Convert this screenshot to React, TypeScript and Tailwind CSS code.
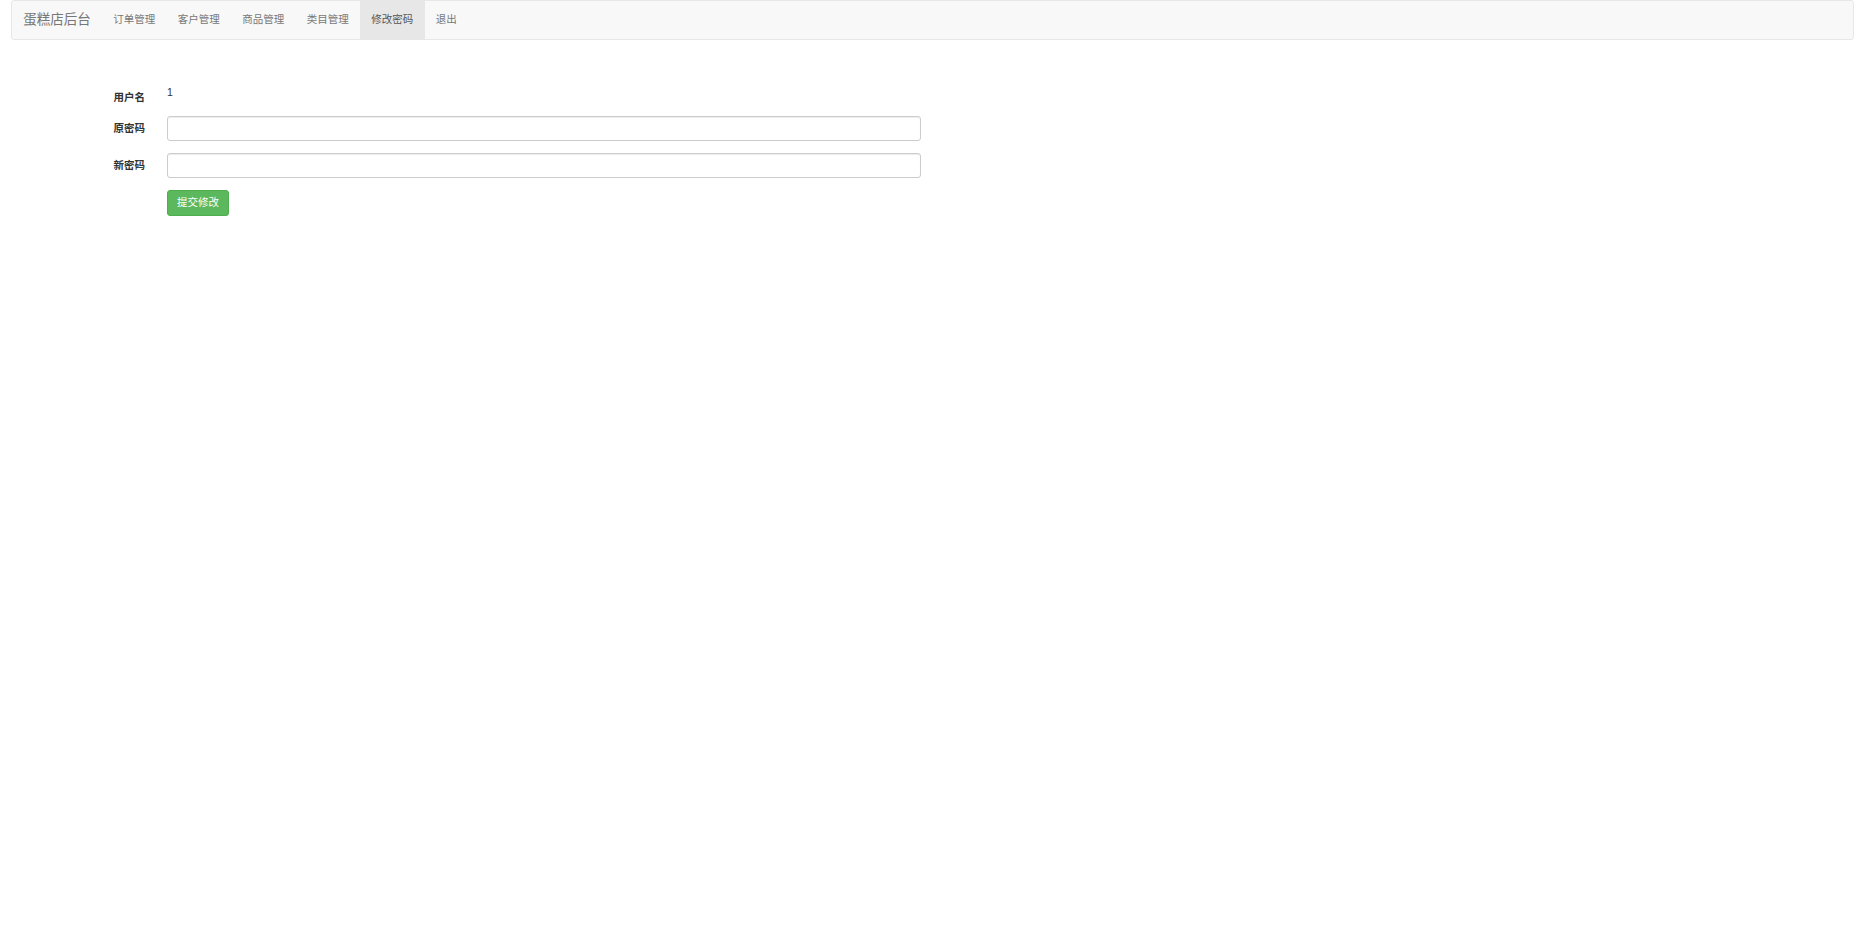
const navItems = ['订单管理', '客户管理', '商品管理', '类目管理', '修改密码', '退出'];
const active = '修改密码';

function Navbar() {
  return (
    <nav className="mx-[11px] flex h-[40px] rounded-[3px] border border-[#e7e7e7] bg-[#f8f8f8]">
      <a className="flex items-center px-[11.25px] text-[13.5px] text-[#777]">蛋糕店后台</a>
      <ul className="flex">
        {navItems.map((item) => (
          <li
            key={item}
            className={
              item === active
                ? 'flex items-center bg-[#e7e7e7] px-[11.25px] text-[10.5px] text-[#555]'
                : 'flex items-center px-[11.25px] text-[10.5px] text-[#777]'
            }
          >
            {item}
          </li>
        ))}
      </ul>
    </nav>
  );
}

function PasswordRow({ label }: { label: string }) {
  return (
    <div className="flex h-[25.5px] items-center">
      <label className="w-[44px] text-right text-[10.5px] font-bold leading-[15px] text-[#333]">{label}</label>
      <input
        type="password"
        className="ml-[22px] h-[25.5px] w-[754px] rounded-[3px] border border-[#ccc] bg-white px-[9px] text-[10.5px] shadow-[inset_0_1px_1px_rgba(0,0,0,0.075)] outline-none"
      />
    </div>
  );
}

export default function App() {
  return (
    <div className="min-h-screen bg-white font-['Liberation_Sans','Noto_Sans_CJK_SC',sans-serif] text-[#333]">
      <Navbar />

      <form className="ml-[101px] mt-[39px] flex flex-col gap-[11.25px]">
        <div className="flex h-[25.5px]">
          <label className="w-[44px] pt-[11px] text-right text-[10.5px] font-bold leading-[15px]">用户名</label>
          <div className="ml-[22px] pt-[6px] text-[10.5px] leading-[15px] text-[#333]">1</div>
        </div>
        <PasswordRow label="原密码" />
        <PasswordRow label="新密码" />
        <div className="pl-[66px]">
          <button
            type="button"
            className="h-[25.5px] rounded-[3px] border border-[#4cae4c] bg-[#5cb85c] px-[9px] text-[10.5px] text-white"
          >
            提交修改
          </button>
        </div>
      </form>
    </div>
  );
}
